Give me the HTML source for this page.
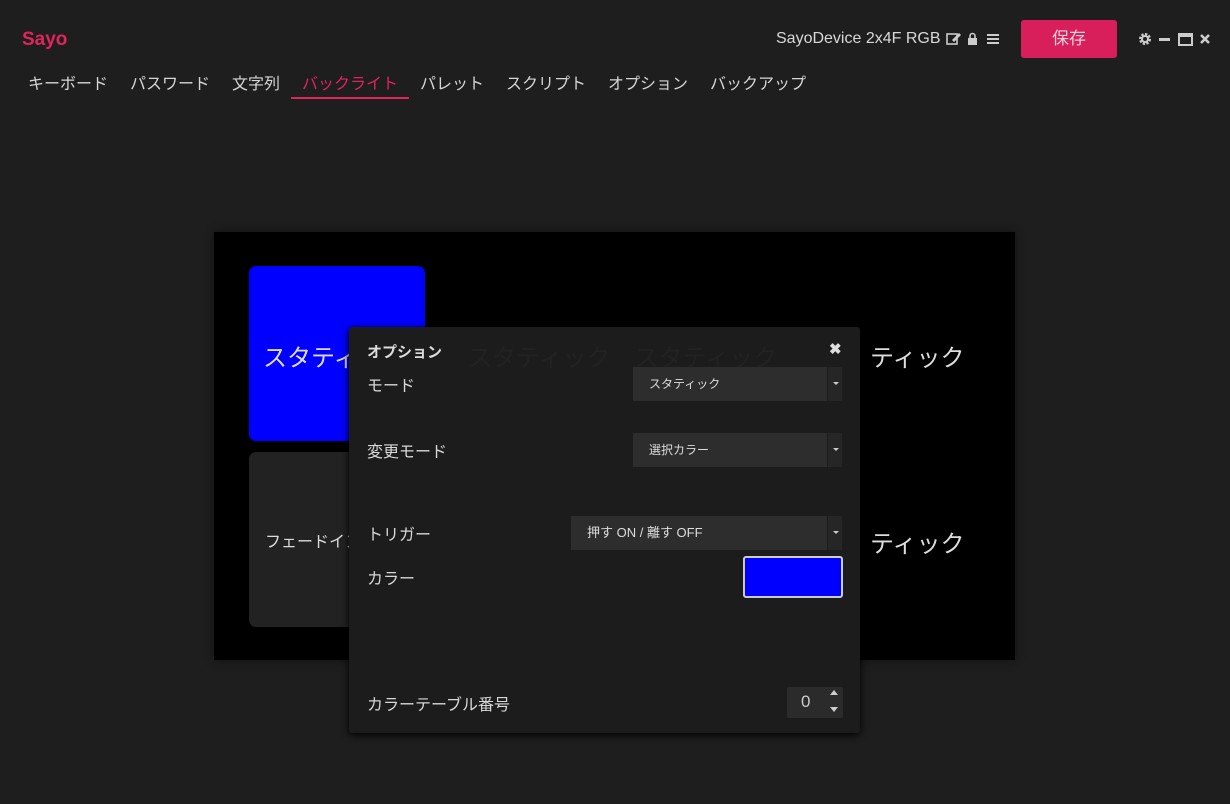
<!DOCTYPE html>
<html><head><meta charset="utf-8"><style>
*{margin:0;padding:0;box-sizing:border-box}
body{width:1230px;height:804px;background:#1e1e1e;font-family:"Liberation Sans","Noto Sans CJK JP",sans-serif;color:#d0d0d0;position:relative;overflow:hidden}
.a{position:absolute;white-space:nowrap}
.tab{position:absolute;top:70px;font-size:16px;color:#d6d6d6}
.sel{position:absolute;height:34px;background:#2d2d2d;font-size:12px;color:#ddd;padding-left:16px;line-height:34px}
.sel .ar{position:absolute;right:0;top:0;width:15px;height:34px;background:#262626;border-left:1px solid #1c1c1c}
.sel .ar:after{content:"";position:absolute;left:5px;top:15px;border:3px solid transparent;border-top:3px solid #ccc}
.lbl{position:absolute;left:367px;font-size:16px;color:#d8d8d8}
</style></head><body>
<div class="a" style="left:22px;top:29px;font-size:19px;color:#e0245e;font-weight:bold">Sayo</div>
<div class="tab" style="left:28px">キーボード</div>
<div class="tab" style="left:130px">パスワード</div>
<div class="tab" style="left:232px">文字列</div>
<div class="tab" style="left:302px;color:#e0245e">バックライト</div>
<div class="a" style="left:291px;top:97px;width:118px;height:2px;background:#e0245e"></div>
<div class="tab" style="left:420px">パレット</div>
<div class="tab" style="left:506px">スクリプト</div>
<div class="tab" style="left:608px">オプション</div>
<div class="tab" style="left:710px">バックアップ</div>
<div class="a" style="left:776px;top:30px;font-size:16px;color:#d8d8d8">SayoDevice 2x4F RGB</div>
<svg class="a" style="left:946px;top:31px" width="60" height="16" viewBox="0 0 60 16">
<rect x="1" y="3" width="10" height="10" fill="none" stroke="#ccc" stroke-width="1.6"/><path d="M6 9 L13 2 L15 4 L8 11 Z" fill="#ccc"/>
<rect x="22" y="7" width="9" height="7" fill="#ccc"/><path d="M24 7 V5 a2.5 2.5 0 0 1 5 0 V7" fill="none" stroke="#ccc" stroke-width="1.6"/>
<rect x="41" y="3" width="12" height="2" fill="#ccc"/><rect x="41" y="7" width="12" height="2" fill="#ccc"/><rect x="41" y="11" width="12" height="2" fill="#ccc"/></svg>
<div class="a" style="left:1021px;top:20px;width:96px;height:38px;background:#d81f5c;border-radius:3px;color:#e8d0d8;font-size:17px;text-align:center;line-height:38px">保存</div>
<svg class="a" style="left:1138px;top:31px" width="74" height="16" viewBox="0 0 74 16">
<circle cx="7" cy="8" r="4.5" fill="none" stroke="#ccc" stroke-width="3" stroke-dasharray="2.2 1.3"/><circle cx="7" cy="8" r="3" fill="none" stroke="#ccc" stroke-width="2"/>
<rect x="21" y="7" width="11" height="3" fill="#ccc"/>
<rect x="41" y="3" width="13" height="11" fill="none" stroke="#ccc" stroke-width="2"/><rect x="41" y="3" width="13" height="3" fill="#ccc"/>
<path d="M63 4 L71 12 M71 4 L63 12" stroke="#ccc" stroke-width="2.6"/></svg>

<div class="a" style="left:214px;top:232px;width:801px;height:428px;background:#000;box-shadow:0 0 8px #111"></div>
<div class="a" style="left:249px;top:266px;width:176px;height:175px;background:#0000ff;border-radius:7px"></div>
<div class="a" style="left:263px;top:338px;font-size:24px;color:#ddd">スタティ</div>
<div class="a" style="left:249px;top:452px;width:176px;height:175px;background:#222;border-radius:7px"></div>
<div class="a" style="left:265px;top:528px;font-size:16px;color:#ddd">フェードイン</div>
<div class="a" style="left:870px;top:338px;font-size:24px;color:#ddd">ティック</div>
<div class="a" style="left:870px;top:524px;font-size:24px;color:#ddd">ティック</div>

<div class="a" style="left:349px;top:327px;width:511px;height:406px;background:#1c1c1c;border-radius:3px;box-shadow:0 2px 8px #000"></div>
<div class="a" style="left:468px;top:338px;font-size:24px;color:#222">スタティック　スタティック</div>
<div class="a" style="left:367px;top:341px;font-size:15px;font-weight:bold;color:#ddd">オプション</div>
<div class="a" style="left:829px;top:340px;font-size:15px;font-weight:bold;color:#ddd">✖</div>
<div class="lbl" style="top:372px">モード</div>
<div class="sel" style="left:633px;top:367px;width:209px">スタティック<div class="ar"></div></div>
<div class="lbl" style="top:438px">変更モード</div>
<div class="sel" style="left:633px;top:433px;width:209px">選択カラー<div class="ar"></div></div>
<div class="lbl" style="top:521px">トリガー</div>
<div class="sel" style="left:571px;top:516px;width:271px;font-size:13px">押す ON / 離す OFF<div class="ar"></div></div>
<div class="lbl" style="top:565px">カラー</div>
<div class="a" style="left:743px;top:556px;width:100px;height:42px;background:#0000ff;border:2px solid #ccc;border-radius:3px"></div>
<div class="lbl" style="top:691px">カラーテーブル番号</div>
<div class="a" style="left:787px;top:687px;width:56px;height:31px;background:#2b2b2b;border-radius:2px"></div>
<div class="a" style="left:801px;top:692px;font-size:17px;color:#ccc">0</div>
<div class="a" style="left:830px;top:690px;border:4px solid transparent;border-bottom:5px solid #ccc;border-top:0"></div>
<div class="a" style="left:830px;top:707px;border:4px solid transparent;border-top:5px solid #ccc;border-bottom:0"></div>
</body></html>
